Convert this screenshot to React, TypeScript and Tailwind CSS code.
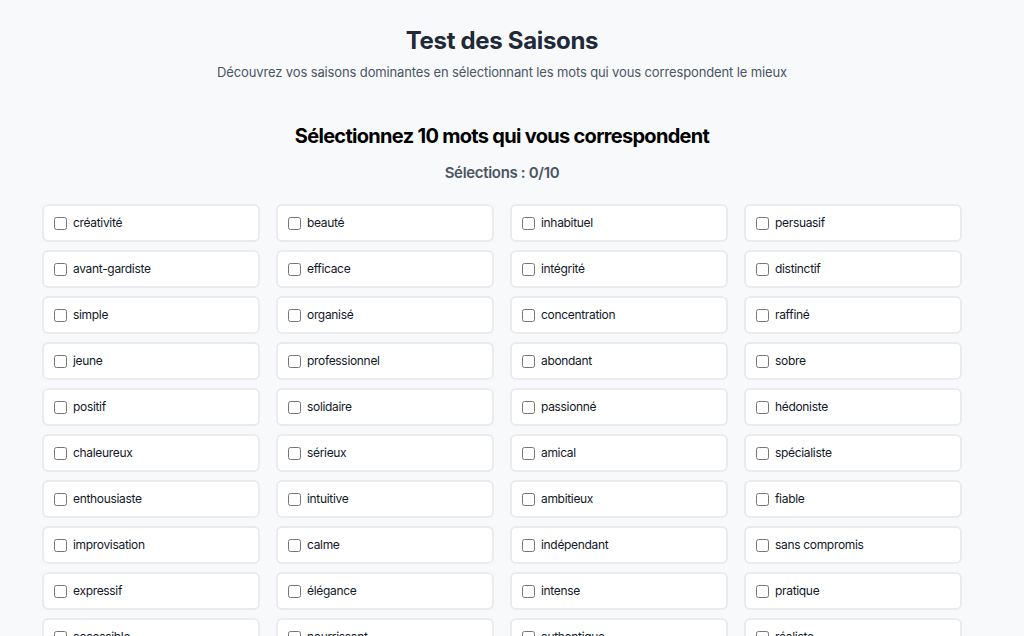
import React from "react";

const words = [
  "créativité", "beauté", "inhabituel", "persuasif",
  "avant-gardiste", "efficace", "intégrité", "distinctif",
  "simple", "organisé", "concentration", "raffiné",
  "jeune", "professionnel", "abondant", "sobre",
  "positif", "solidaire", "passionné", "hédoniste",
  "chaleureux", "sérieux", "amical", "spécialiste",
  "enthousiaste", "intuitive", "ambitieux", "fiable",
  "improvisation", "calme", "indépendant", "sans compromis",
  "expressif", "élégance", "intense", "pratique",
  "accessible", "nourrissant", "authentique", "réaliste",
];

export default function App() {
  return (
    <div className="min-h-screen bg-[#f8f9fb] font-['Inter',sans-serif] tracking-[-0.02em]">
      <div className="w-[1004px]">
        <div className="mx-auto w-[920px] pt-[25px] pb-10">
          <h1 className="text-center text-[24px] leading-8 font-bold text-[#1f2937]">Test des Saisons</h1>
          <p className="mt-[5px] text-center text-[13px] leading-5 tracking-[-0.01em] text-[#4b5563]">
            Découvrez vos saisons dominantes en sélectionnant les mots qui vous correspondent le mieux
          </p>
          <h2 className="mt-[40px] text-center text-[20px] leading-7 font-bold tracking-[-0.035em] text-black">
            Sélectionnez 10 mots qui vous correspondent
          </h2>
          <p className="mt-[11px] text-center text-[15px] leading-6 font-semibold text-[#4b5563]">Sélections : 0/10</p>
          <div className="mt-[19px] grid grid-cols-4 gap-x-4 gap-y-2">
            {words.map((w) => (
              <label
                key={w}
                className="flex h-[38px] items-center gap-[6px] rounded-md border-2 border-[#e9ebee] bg-white px-[10px]"
              >
                <input type="checkbox" className="m-0 h-[13px] w-[13px]" />
                <span className="text-[12px] leading-4 text-[#111827]">{w}</span>
              </label>
            ))}
          </div>
        </div>
      </div>
    </div>
  );
}
